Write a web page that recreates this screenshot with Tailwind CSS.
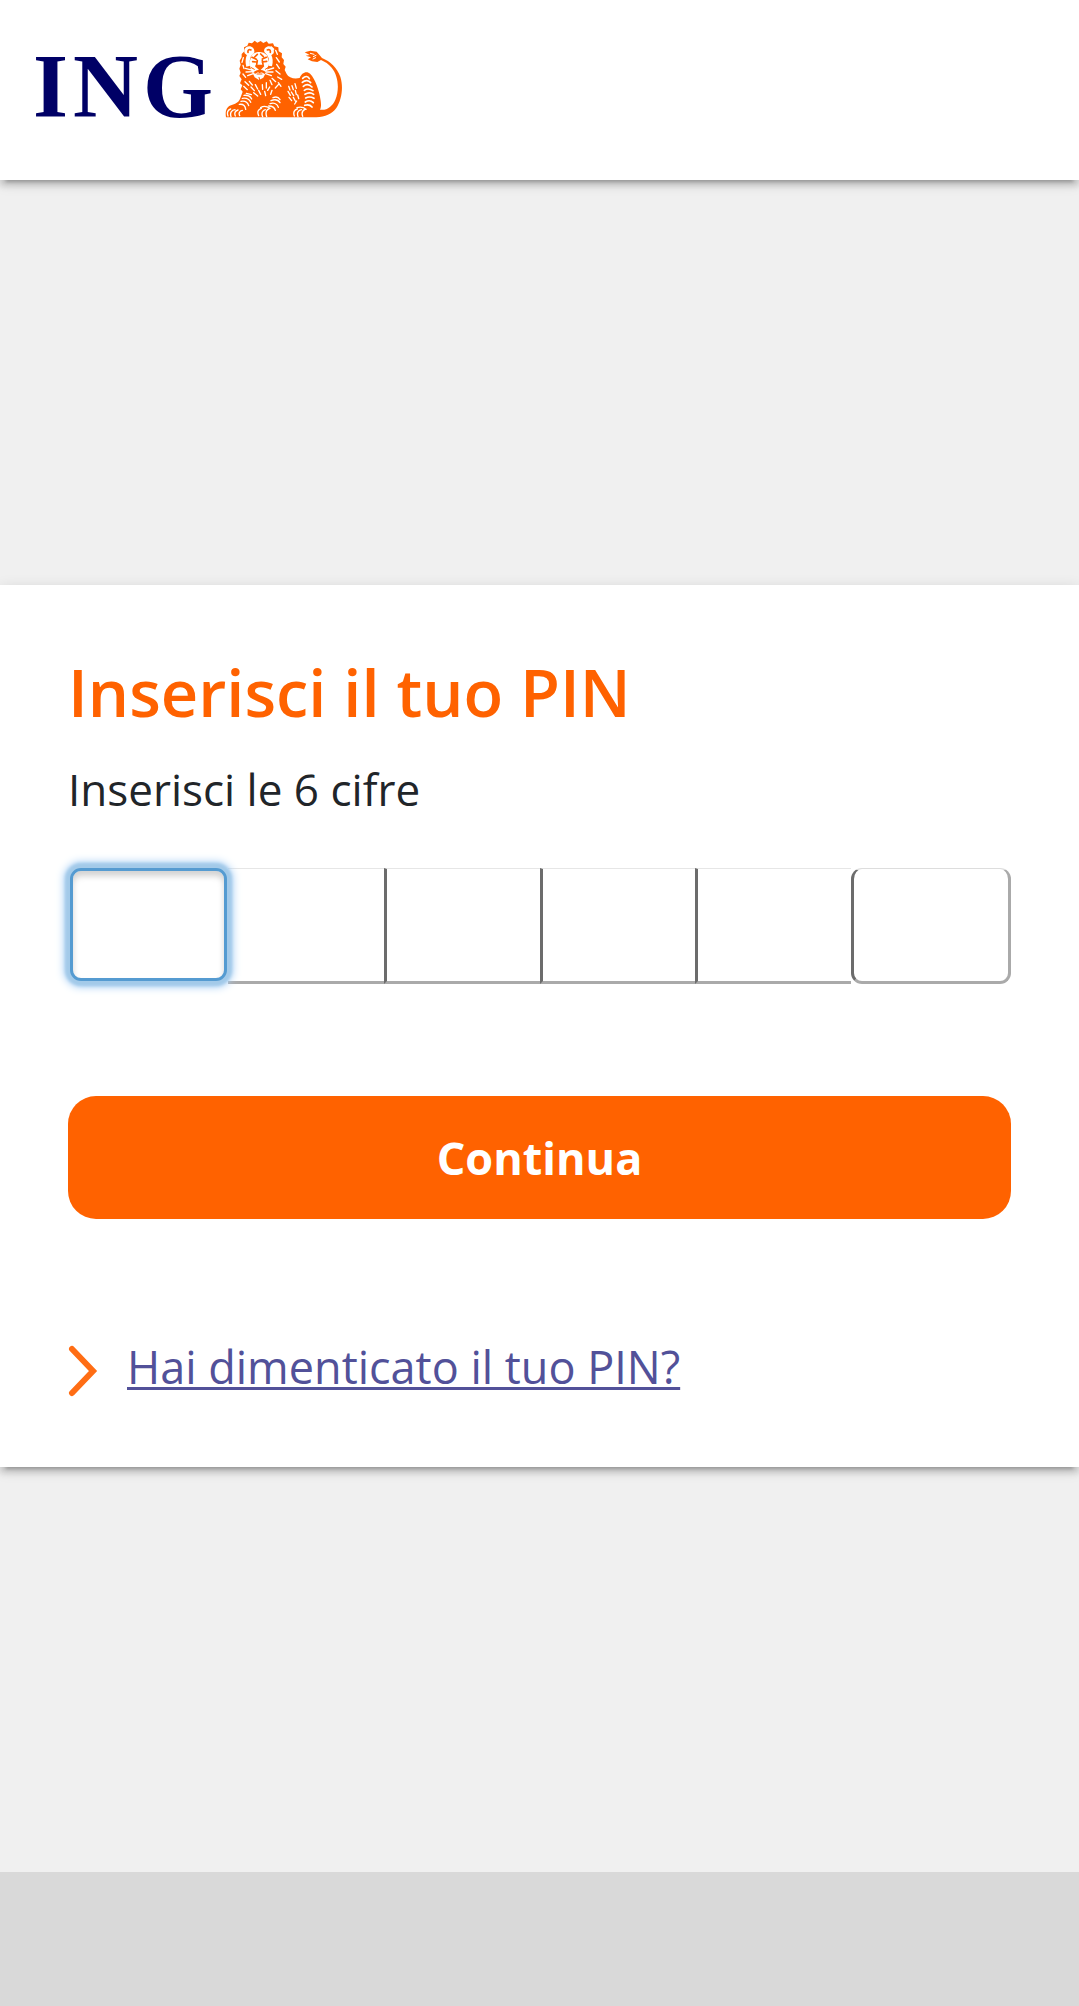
<!DOCTYPE html>
<html lang="it">
<head>
<meta charset="utf-8">
<meta name="viewport" content="width=device-width, initial-scale=1">
<title>ING - Inserisci il tuo PIN</title>
<script src="https://cdn.jsdelivr.net/npm/@tailwindcss/browser@4"></script>
</head>
<body class="flex min-h-screen flex-col bg-[#f0f0f0] font-['Open_Sans','Noto_Sans',sans-serif]">
<header class="relative flex h-[180px] items-start bg-white px-[33px] pt-[30px] shadow-[0_8px_3px_-6px_rgba(0,0,0,0.2),0_6px_6px_0_rgba(0,0,0,0.14),0_3px_14px_0_rgba(0,0,0,0.12)]">
  <a href="#" class="flex items-start gap-[2px]" aria-label="ING">
    <span class="flex w-[180px] justify-between pt-[5px] font-['Liberation_Serif',serif] text-[90px] leading-[104px] font-bold text-[#000066]"><span>I</span><span>N</span><span>G</span></span>
    <svg class="h-[100px] w-[140px]" viewBox="0 0 420 300" fill="none" stroke-linecap="round" stroke-linejoin="round" aria-hidden="true">
      <path fill="#ff6200" d="M33 262 C30 246 34 230 48 226 C60 221 70 219 75 207 L83 185 L77 178 L82 166 L75 160 L80 148 L73 138 L77 128 L73 116 L77 104 L74 92 L80 82 L80 72 L88 64 L87 52 L97 47 L101 38 L111 40 L119 32 L127 38 L137 33 L145 39 L155 34 L161 41 L174 40 L178 49 L190 52 L191 64 L201 70 L200 82 L207 90 L205 102 L212 110 L209 120 L215 132 C221 143 237 148 254 144 C259 129 275 121 286 132 C300 146 313 181 317 212 C319 225 318 233 315 239 C336 242 352 229 361 209 C374 178 370 137 350 113 C341 102 330 95 318 90 L307 96 L291 94 L278 88 L288 82 L272 77 L284 75 L269 67 L286 62 L305 65 L314 76 L321 84 C346 94 366 113 376 140 C386 172 380 209 364 234 C350 253 331 260 304 262 Z"/>
      <g fill="#fff">
        <path d="M89 70 C84 55 96 45 109 50 C117 53 119 61 118 68 L108 78 C104 88 103 98 105 107 L94 110 C90 96 92 82 96 76Z"/>
        <path d="M176 70 C180 55 168 45 156 50 C148 53 146 60 148 66 L158 77 C163 86 163 98 160 107 L171 109 C175 96 173 83 169 76Z"/>
        <path d="M110 75 C122 63 145 62 156 76 L163 99 L153 127 L145 143 L132 150 L119 142 L108 119 L103 98Z"/>
      </g>
      <g stroke="#ff6200" stroke-width="5">
        <path d="M99 67 C98 60 102 57 108 60 M166 67 C167 60 163 57 157 60 M111 82 L124 88 M142 87 L154 82 M113 95 L124 96 M142 96 L155 94 M119 81 L127 73 M137 72 L145 80 M127 92 L125 104 M142 91 L144 103"/>
        <path stroke-width="7" d="M124 108 H144 L135 117Z M134 117 V126 M119 128 C128 122 140 122 150 128"/>
        <path stroke-width="3" d="M109 113 L118 118 M151 118 L160 112 M126 132 L141 132 M132 142 L134 149"/>
      </g>
      <g stroke="#fff" stroke-width="4">
        <path d="M91 115 L114 121 M93 126 L116 125 M98 137 L117 130 M176 114 L153 121 M174 126 L153 126 M169 137 L152 131"/>
        <path d="M85 83 L81 97 M84 106 L87 116 M84 132 L92 142 M90 155 L101 166 M86 169 L97 179 M103 154 L112 165 M108 171 L118 182 M121 164 L128 177 M131 181 L137 193 M142 164 L143 178 M154 158 L154 174 M165 151 L171 164 M171 145 L182 155 M184 83 L193 96 M185 103 L193 115 M183 122 L195 132 M188 141 L200 148 M158 181 L164 171 M181 174 L190 164 M190 158 L198 169 M94 190 L109 194 M116 188 L128 198 M149 184 L152 197 M171 181 L167 193 M182 61 L187 73 M169 51 L176 58"/>
        <path d="M87 196 C98 195 106 199 110 207 M82 205 C94 203 103 208 107 217 M78 214 C90 212 98 217 101 227 M73 223 C84 222 91 228 92 238 M174 203 C183 199 191 202 195 209 M168 212 C180 207 190 210 195 218 M165 221 C178 217 187 223 190 232 M161 228 C171 228 179 233 181 241"/>
        <path d="M221 169 L225 180 M231 167 L235 179 M240 161 L244 175 M219 184 L226 196 M229 186 L236 197 M241 181 L244 194 M222 202 L230 212 M235 202 L241 213 M248 195 L251 206 M245 213 L239 222"/>
        <path stroke-width="5" d="M263 145 C271 137 279 138 283 146 M262 157 C271 149 281 151 287 158 M265 169 C274 161 284 164 291 171 M268 181 C276 175 286 177 294 182 M270 193 C280 187 289 188 296 193 M272 204 C281 199 290 201 297 205 M271 216 C279 211 289 212 295 218 M269 226 C278 223 286 225 291 231"/>
        <path d="M39 258 C35 247 39 239 47 237 M48 260 C44 248 50 240 60 239 M61 258 C57 249 61 242 69 240 M74 257 C70 249 74 243 82 241 M131 257 C126 246 129 238 139 235 M143 260 C138 249 143 241 151 239 M155 260 C151 248 155 239 163 236 M137 233 C146 227 156 229 165 235 M238 258 C234 247 238 239 247 237 M249 260 C245 249 249 241 259 239 M263 259 C259 248 263 241 270 238 M246 233 C255 230 265 231 273 238"/>
        <path stroke-width="3" d="M286 70 L297 73 M295 80 L303 76 M294 87 L302 83"/>
      </g>
    </svg>
  </a>
</header>

<main class="flex flex-1 flex-col justify-center">
  <form class="bg-white px-[68px] pt-[62px] pb-[68px] shadow-[0_8px_3px_-6px_rgba(0,0,0,0.2),0_6px_6px_0_rgba(0,0,0,0.14),0_3px_14px_0_rgba(0,0,0,0.12)]">
    <h1 class="text-[65px] leading-[90px] font-semibold text-[#ff6200]">Inserisci il tuo PIN</h1>
    <p class="mt-5 text-[44px] leading-[64px] text-[#212529]" id="hint">Inserisci le 6 cifre</p>
    <div class="mt-[47px] grid h-[116px] grid-cols-[40fr_39fr_39fr_39fr_39fr_40fr]" role="group" aria-labelledby="hint">
      <input class="relative z-10 mr-px mb-[3px] ml-[2px] min-w-0 rounded-[11px] border-[3px] border-[#559bd1] bg-white text-center text-[44px] shadow-[inset_0_5px_6px_rgba(0,0,0,0.18),0_0_3px_5px_#a3cae9,0_0_8px_6px_#a9d0f5] outline-none" type="password" maxlength="1" inputmode="numeric" aria-label="Cifra 1">
      <input class="min-w-0 border-t border-b-[3px] border-t-[#e6e6e6] border-b-[#aaaaaa] text-center text-[44px] outline-none" type="password" maxlength="1" inputmode="numeric" aria-label="Cifra 2">
      <input class="min-w-0 border-t border-b-[3px] border-l-[3px] border-t-[#e6e6e6] border-b-[#aaaaaa] border-l-[#6c6c6c] text-center text-[44px] outline-none" type="password" maxlength="1" inputmode="numeric" aria-label="Cifra 3">
      <input class="min-w-0 border-t border-b-[3px] border-l-[3px] border-t-[#e6e6e6] border-b-[#aaaaaa] border-l-[#6c6c6c] text-center text-[44px] outline-none" type="password" maxlength="1" inputmode="numeric" aria-label="Cifra 4">
      <input class="min-w-0 border-t border-b-[3px] border-l-[3px] border-t-[#e6e6e6] border-b-[#aaaaaa] border-l-[#6c6c6c] text-center text-[44px] outline-none" type="password" maxlength="1" inputmode="numeric" aria-label="Cifra 5">
      <input class="min-w-0 rounded-[11px] border-t border-r-[3px] border-b-[3px] border-l-[3px] border-t-[#dddddd] border-r-[#aaaaaa] border-b-[#aaaaaa] border-l-[#6c6c6c] text-center text-[44px] outline-none" type="password" maxlength="1" inputmode="numeric" aria-label="Cifra 6">
    </div>
    <button type="button" class="mt-[112px] block h-[123px] w-full rounded-[28px] bg-[#ff6200] text-[45px] leading-[64px] font-bold text-white">Continua</button>
    <a href="#" class="mt-[116px] flex h-[64px] items-center gap-[29px] text-[45px] leading-[64px] text-[#525199]">
      <svg class="mt-2 h-[52px] w-[30px] shrink-0" viewBox="0 0 30 52" fill="none" stroke="#ff6d14" stroke-width="6" stroke-linecap="round" aria-hidden="true"><path d="M4 4 L25 26 L4 48"/></svg>
      <span class="underline decoration-[3px] underline-offset-[3px] [text-decoration-skip-ink:none]">Hai dimenticato il tuo PIN?</span>
    </a>
  </form>
</main>
<footer class="h-[134px] bg-[#d9d9d9]"></footer>
</body>
</html>
